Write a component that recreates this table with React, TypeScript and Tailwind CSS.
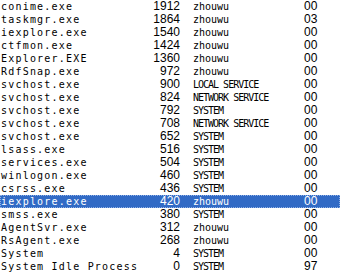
import React from 'react';

type Proc = { name: string; pid: number; user: string; cpu: string };

const procs: Proc[] = [
  { name: 'conime.exe', pid: 1912, user: 'zhouwu', cpu: '00' },
  { name: 'taskmgr.exe', pid: 1864, user: 'zhouwu', cpu: '03' },
  { name: 'iexplore.exe', pid: 1540, user: 'zhouwu', cpu: '00' },
  { name: 'ctfmon.exe', pid: 1424, user: 'zhouwu', cpu: '00' },
  { name: 'Explorer.EXE', pid: 1360, user: 'zhouwu', cpu: '00' },
  { name: 'RdfSnap.exe', pid: 972, user: 'zhouwu', cpu: '00' },
  { name: 'svchost.exe', pid: 900, user: 'LOCAL SERVICE', cpu: '00' },
  { name: 'svchost.exe', pid: 824, user: 'NETWORK SERVICE', cpu: '00' },
  { name: 'svchost.exe', pid: 792, user: 'SYSTEM', cpu: '00' },
  { name: 'svchost.exe', pid: 708, user: 'NETWORK SERVICE', cpu: '00' },
  { name: 'svchost.exe', pid: 652, user: 'SYSTEM', cpu: '00' },
  { name: 'lsass.exe', pid: 516, user: 'SYSTEM', cpu: '00' },
  { name: 'services.exe', pid: 504, user: 'SYSTEM', cpu: '00' },
  { name: 'winlogon.exe', pid: 460, user: 'SYSTEM', cpu: '00' },
  { name: 'csrss.exe', pid: 436, user: 'SYSTEM', cpu: '00' },
  { name: 'iexplore.exe', pid: 420, user: 'zhouwu', cpu: '00' },
  { name: 'smss.exe', pid: 380, user: 'SYSTEM', cpu: '00' },
  { name: 'AgentSvr.exe', pid: 312, user: 'zhouwu', cpu: '00' },
  { name: 'RsAgent.exe', pid: 268, user: 'zhouwu', cpu: '00' },
  { name: 'System', pid: 4, user: 'SYSTEM', cpu: '00' },
  { name: 'System Idle Process', pid: 0, user: 'SYSTEM', cpu: '97' },
];

const SELECTED = 15;

export default function App() {
  return (
    <div className="w-[341px] h-[279px] bg-white overflow-hidden font-['DejaVu_Sans_Mono',monospace] text-[10px] leading-[13px]">
      {procs.map((p, i) => {
        const sel = i === SELECTED;
        const caps = p.user === p.user.toUpperCase();
        return (
          <div
            key={i}
            className={
              sel
                ? 'flex items-center h-[13px] w-[340px] bg-[#316ac5] text-white outline-1 outline-dotted outline-[#8fb0e6] -outline-offset-1'
                : 'flex items-center h-[13px] w-[340px] text-black'
            }
          >
            <span className="w-[150px] pl-[1px] whitespace-pre tracking-[1.2px]">{p.name}</span>
            <span className="w-[30px] text-right font-['Liberation_Sans',sans-serif] text-[12px] leading-[13px]">{p.pid}</span>
            <span
              className={
                caps
                  ? 'w-[124px] pl-[13px] whitespace-pre tracking-[-1px]'
                  : 'w-[124px] pl-[13px] whitespace-pre'
              }
            >
              {p.user}
            </span>
            <span className="font-['Liberation_Sans',sans-serif] text-[12px] leading-[13px]">{p.cpu}</span>
          </div>
        );
      })}
    </div>
  );
}
